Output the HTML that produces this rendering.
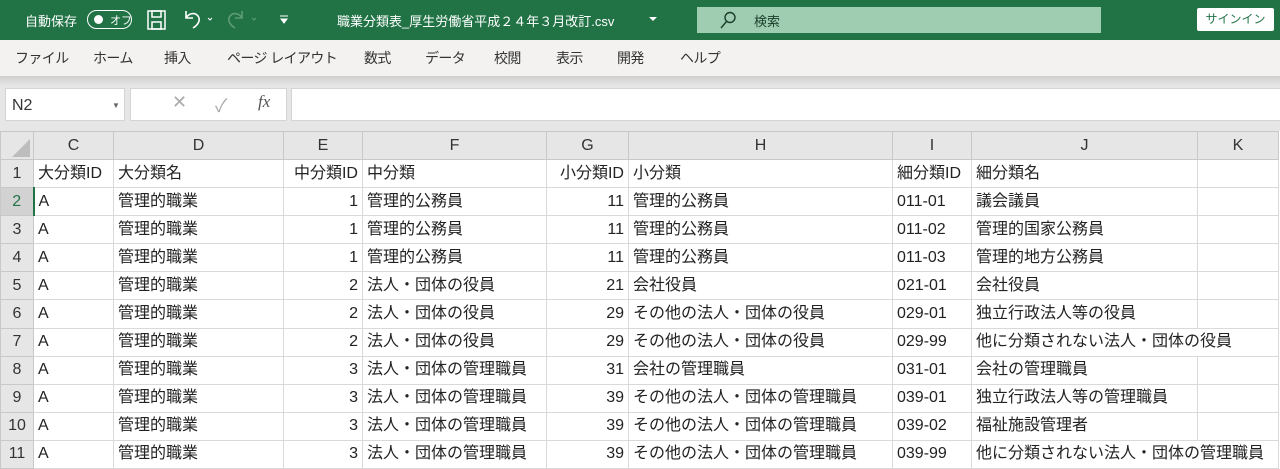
<!DOCTYPE html>
<html><head><meta charset="utf-8"><style>
*{margin:0;padding:0;box-sizing:border-box}
body{width:1280px;height:469px;overflow:hidden;background:#fff;font-family:"Liberation Sans","Noto Sans CJK JP",sans-serif;position:relative;color:#222}
.abs{position:absolute}
#title{left:0;top:0;width:1280px;height:40px;background:#217346;color:#fff;font-size:13px}
#ribbon{left:0;top:40px;width:1280px;height:36px;background:#f3f2f1;font-size:14px;color:#333;letter-spacing:-0.6px}
#shadow{left:0;top:76px;width:1280px;height:10px;background:linear-gradient(#cfcfcf,#e6e6e6)}
#fbar{left:0;top:86px;width:1280px;height:45px;background:#e6e6e6}
.box{background:#fff;border:1px solid #d4d4d4}
table{position:absolute;left:0;top:131px;border-collapse:collapse;table-layout:fixed;font-size:16px}
td{height:28.1px;border:1px solid #d9d9d9;white-space:nowrap;overflow:visible;padding:0 4px;line-height:26px}
tr.h td{background:#e6e6e6;text-align:center;color:#333;border-color:#c8c8c8;height:28px}
td.r{background:#e6e6e6;text-align:center;color:#333;border-color:#c8c8c8;padding:0}
td.n{text-align:right}
</style></head><body>
<div id="title" class="abs">
 <span class="abs" style="left:25px;top:11px">自動保存</span>
 <div class="abs" style="left:87px;top:10px;width:45px;height:19px;border:1.5px solid #fff;border-radius:10px"></div>
 <div class="abs" style="left:94px;top:15px;width:9px;height:9px;background:#fff;border-radius:50%"></div>
 <span class="abs" style="left:110px;top:12px;font-size:11px">オフ</span>
 <svg class="abs" style="left:147px;top:10px" width="20" height="20" viewBox="0 0 20 20" fill="none" stroke="#fff" stroke-width="1.5"><rect x="1" y="1" width="17" height="18"/><rect x="5" y="1" width="9" height="6"/><rect x="5" y="12" width="9" height="7"/></svg>
 <svg class="abs" style="left:182px;top:8px" width="34" height="22" viewBox="0 0 34 22" fill="none" stroke="#fff" stroke-width="1.6"><path d="M4 3v7h7M4 10c3-5 9-6 12-2s0 9-5 12"/><path d="M26 10l2 2 2-2" stroke-width="1"/></svg>
 <svg class="abs" style="left:226px;top:8px" width="34" height="22" viewBox="0 0 34 22" fill="none" stroke="#5c9c78" stroke-width="1.6"><path d="M16 3v7H9M16 10c-3-5-9-6-12-2s0 9 5 12"/><path d="M26 10l2 2 2-2" stroke-width="1"/></svg>
 <svg class="abs" style="left:278px;top:13px" width="12" height="12"><path d="M2 3h8M3 6h6l-3 4z" stroke="#fff" fill="#fff"/></svg>
 <span class="abs" style="left:337px;top:11px">職業分類表_厚生労働省平成２４年３月改訂.csv</span>
 <svg class="abs" style="left:648px;top:15px" width="10" height="8"><path d="M1 2h8l-4 4z" fill="#fff"/></svg>
 <div class="abs" style="left:697px;top:7px;width:404px;height:26px;background:#9fcdb1"></div>
 <svg class="abs" style="left:718px;top:10px" width="20" height="20" fill="none" stroke="#1b3d2a" stroke-width="1.4"><circle cx="12" cy="7.5" r="5"/><path d="M8.5 11.5L3 18"/></svg>
 <span class="abs" style="left:754px;top:11px;color:#1b3d2a">検索</span>
 <div class="abs" style="left:1197px;top:8px;width:77px;height:23px;background:#fff;border-radius:2px;color:#217346;font-size:12px;text-align:center;line-height:23px">サインイン</div>
</div>
<div id="ribbon" class="abs">
 <span class="abs" style="left:15px;top:8px">ファイル</span>
 <span class="abs" style="left:93px;top:8px">ホーム</span>
 <span class="abs" style="left:164px;top:8px">挿入</span>
 <span class="abs" style="left:227px;top:8px">ページ レイアウト</span>
 <span class="abs" style="left:364px;top:8px">数式</span>
 <span class="abs" style="left:425px;top:8px">データ</span>
 <span class="abs" style="left:494px;top:8px">校閲</span>
 <span class="abs" style="left:556px;top:8px">表示</span>
 <span class="abs" style="left:617px;top:8px">開発</span>
 <span class="abs" style="left:680px;top:8px">ヘルプ</span>
</div>
<div id="shadow" class="abs"></div>
<div id="fbar" class="abs">
 <div class="abs box" style="left:5px;top:2px;width:120px;height:33px;font-size:16px;line-height:33px;padding-left:6px;color:#333">N2<span class="abs" style="left:106px;top:0;font-size:8px;color:#666">▼</span></div>
 <span class="abs" style="left:139px;top:8px;color:#aaa;font-size:14px">⋮</span>
 <div class="abs box" style="left:130px;top:2px;width:157px;height:33px"></div>
 <span class="abs" style="left:172px;top:6px;color:#aaa;font-size:18px">✕</span>
 <span class="abs" style="left:215px;top:6px;color:#aaa;font-size:18px">✓</span>
 <span class="abs" style="left:258px;top:6px;color:#555;font-size:17px;font-style:italic;font-family:'Liberation Serif',serif">fx</span>
 <div class="abs box" style="left:291px;top:2px;width:995px;height:33px"></div>
</div>
<table>
<colgroup><col style="width:33px"><col style="width:80px"><col style="width:170px"><col style="width:79px"><col style="width:184px"><col style="width:82px"><col style="width:264px"><col style="width:79px"><col style="width:226px"><col style="width:81px"></colgroup>
<tr class="h"><td style="position:relative"><svg class="abs" style="left:10px;top:6px" width="20" height="20"><path d="M19 1V19H1z" fill="#bdbdbd"/></svg></td><td>C</td><td>D</td><td>E</td><td>F</td><td>G</td><td>H</td><td>I</td><td>J</td><td>K</td></tr>
<tr><td class="r">1</td><td>大分類ID</td><td>大分類名</td><td class="n">中分類ID</td><td>中分類</td><td class="n">小分類ID</td><td>小分類</td><td>細分類ID</td><td>細分類名</td><td></td></tr>
<tr><td class="r" style="background:#d2d2d2;color:#217346;border-right:2px solid #217346">2</td><td>A</td><td>管理的職業</td><td class="n">1</td><td>管理的公務員</td><td class="n">11</td><td>管理的公務員</td><td>011-01</td><td>議会議員</td><td></td></tr>
<tr><td class="r">3</td><td>A</td><td>管理的職業</td><td class="n">1</td><td>管理的公務員</td><td class="n">11</td><td>管理的公務員</td><td>011-02</td><td>管理的国家公務員</td><td></td></tr>
<tr><td class="r">4</td><td>A</td><td>管理的職業</td><td class="n">1</td><td>管理的公務員</td><td class="n">11</td><td>管理的公務員</td><td>011-03</td><td>管理的地方公務員</td><td></td></tr>
<tr><td class="r">5</td><td>A</td><td>管理的職業</td><td class="n">2</td><td>法人・団体の役員</td><td class="n">21</td><td>会社役員</td><td>021-01</td><td>会社役員</td><td></td></tr>
<tr><td class="r">6</td><td>A</td><td>管理的職業</td><td class="n">2</td><td>法人・団体の役員</td><td class="n">29</td><td>その他の法人・団体の役員</td><td>029-01</td><td>独立行政法人等の役員</td><td></td></tr>
<tr><td class="r">7</td><td>A</td><td>管理的職業</td><td class="n">2</td><td>法人・団体の役員</td><td class="n">29</td><td>その他の法人・団体の役員</td><td>029-99</td><td colspan="2">他に分類されない法人・団体の役員</td></tr>
<tr><td class="r">8</td><td>A</td><td>管理的職業</td><td class="n">3</td><td>法人・団体の管理職員</td><td class="n">31</td><td>会社の管理職員</td><td>031-01</td><td>会社の管理職員</td><td></td></tr>
<tr><td class="r">9</td><td>A</td><td>管理的職業</td><td class="n">3</td><td>法人・団体の管理職員</td><td class="n">39</td><td>その他の法人・団体の管理職員</td><td>039-01</td><td>独立行政法人等の管理職員</td><td></td></tr>
<tr><td class="r">10</td><td>A</td><td>管理的職業</td><td class="n">3</td><td>法人・団体の管理職員</td><td class="n">39</td><td>その他の法人・団体の管理職員</td><td>039-02</td><td>福祉施設管理者</td><td></td></tr>
<tr><td class="r">11</td><td>A</td><td>管理的職業</td><td class="n">3</td><td>法人・団体の管理職員</td><td class="n">39</td><td>その他の法人・団体の管理職員</td><td>039-99</td><td colspan="2">他に分類されない法人・団体の管理職員</td></tr>
</table>
</body></html>
